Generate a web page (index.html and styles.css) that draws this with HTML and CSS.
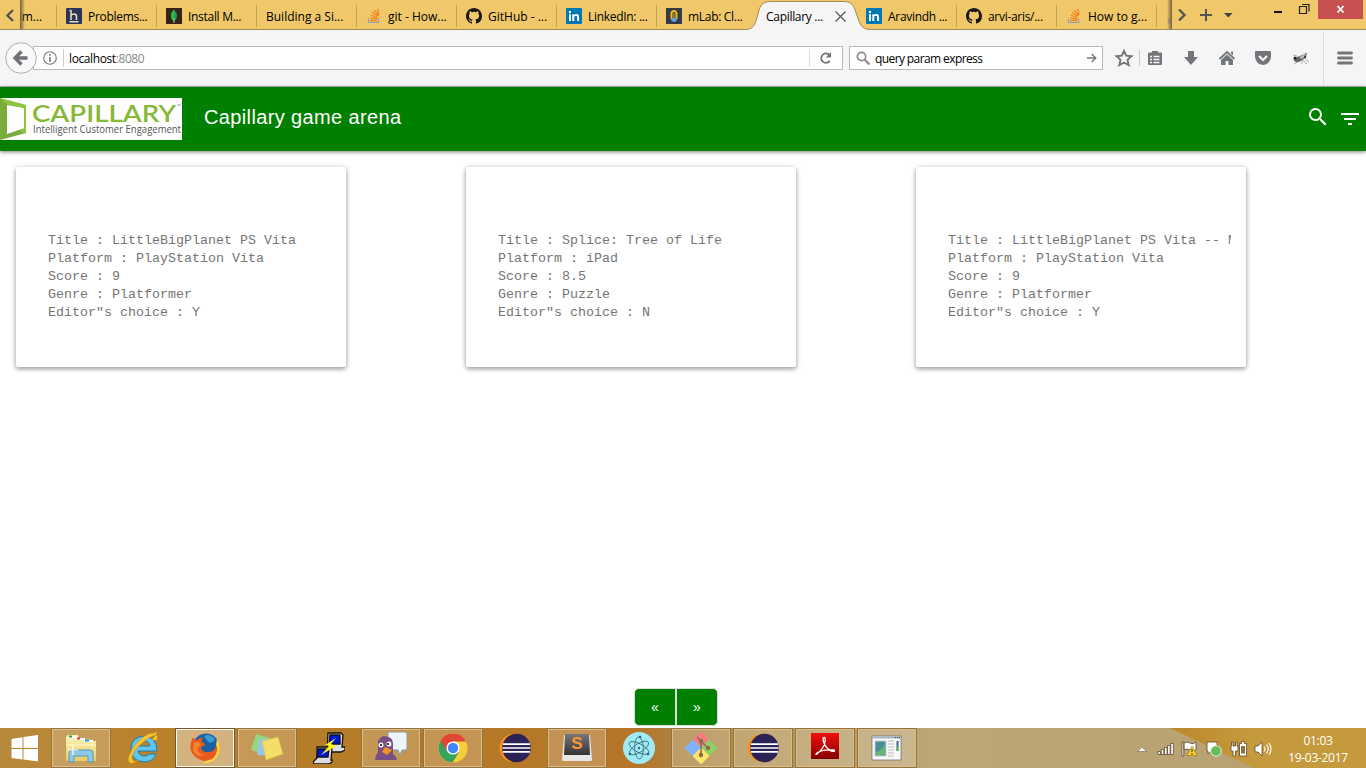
FILE: index.html
```html
<!DOCTYPE html>
<html lang="en">
<head>
<meta charset="utf-8">
<title>Capillary game arena</title>
<link rel="stylesheet" href="styles.css">
</head>
<body>
<svg class="defs" width="0" height="0">
  <defs>
    <symbol id="github" viewBox="0 0 16 16"><path fill="#191717" d="M8 0C3.58 0 0 3.58 0 8c0 3.54 2.29 6.53 5.47 7.59.4.07.55-.17.55-.38v-1.49c-2.22.49-2.69-.94-2.69-.94-.36-.92-.89-1.17-.89-1.17-.72-.5.06-.49.06-.49.8.06 1.22.82 1.22.82.72 1.21 1.87.87 2.33.66.07-.52.28-.87.5-1.07-1.77-.2-3.64-.89-3.64-3.95 0-.87.31-1.59.82-2.15-.08-.2-.36-1.02.08-2.12 0 0 .67-.21 2.2.82a7.6 7.6 0 0 1 4 0c1.53-1.04 2.2-.82 2.2-.82.44 1.1.16 1.92.08 2.12.51.56.82 1.27.82 2.15 0 3.07-1.87 3.75-3.65 3.95.29.25.54.73.54 1.48v2.2c0 .21.15.46.55.38A8 8 0 0 0 16 8c0-4.42-3.58-8-8-8z"/></symbol>
    <symbol id="linkedin" viewBox="0 0 16 16"><rect width="16" height="16" rx="1" fill="#0077b5"/><path fill="#fff" d="M3 6.2h2V13H3zM4 2.8a1.2 1.2 0 1 1 0 2.4 1.2 1.2 0 0 1 0-2.4zM6.3 6.2h2v.9c.4-.7 1.200-1.100 2.200-1.100 2 0 2.600 1.300 2.600 3.200V13h-2V9.600c0-.9-.1-1.900-1.300-1.900s-1.500.9-1.500 1.900V13h-2z"/></symbol>
    <symbol id="overflow" viewBox="0 0 16 16"><path d="M2.500 10.500v4h10v-4" fill="none" stroke="#8ba0bc" stroke-width="1.200"/><g stroke="#f5821f" stroke-width="1.300"><path d="M4 12.500h7M4.200 9.800l7 1.100M4.600 7l6.700 2.500M6 4.200l5.800 4.100M8.300 2.200l4.300 5.500M11.500.8l1.500 6"/></g></symbol>
    <symbol id="eclipse" viewBox="0 0 32 32"><circle cx="14.500" cy="16" r="14" fill="#f7941e"/><circle cx="17.500" cy="16" r="14.300" fill="#2c2255"/><path d="M4 12.200h27M3.500 16h28M4 19.800h27" stroke="#fff" stroke-width="1.700"/></symbol>
    <linearGradient id="folder" x2="0" y2="1"><stop stop-color="#fdf3b8"/><stop offset="1" stop-color="#e9cd68"/></linearGradient>
    <linearGradient id="adobe" x2="0" y2="1"><stop stop-color="#f01010"/><stop offset="1" stop-color="#850000"/></linearGradient>
    <linearGradient id="key" x2="0" y2="1"><stop stop-color="#777"/><stop offset="1" stop-color="#333"/></linearGradient>
  </defs>
</svg>

<div class="browser">
  <div class="tabstrip">
    <div class="scroll scroll-left"><svg width="20" height="30"><path d="M13 10l-5.500 5.500L13 21" fill="none" stroke="#555" stroke-width="2.400"/></svg></div>
    <div class="tabs">
      <div class="tab tab-first"><span>am...</span></div>
      <div class="tab"><svg class="fav" viewBox="0 0 16 16"><rect width="16" height="16" rx="1" fill="#2b3558"/><path d="M5 2v10M5 7.500q1-1.500 3-1.500 2.500 0 2.500 2.500V12M3.500 2.500H5M3.500 13.800h9" fill="none" stroke="#eee0bb" stroke-width="1.500"/></svg><span>Problems...</span></div>
      <div class="tab"><svg class="fav" viewBox="0 0 16 16"><rect width="16" height="16" fill="#36241b"/><path d="M8 1.500Q14 8 8 13.500Q2 8 8 1.500" fill="#13a550"/><path d="M8 1.500Q2 8 8 13.500" fill="#3fb64a"/><path d="M8 10v5" stroke="#9fbb93"/></svg><span>Install M...</span></div>
      <div class="tab"><span class="wide">Building a Si...</span></div>
      <div class="tab"><svg class="fav"><use href="#overflow"/></svg><span class="wide">git - How...</span></div>
      <div class="tab"><svg class="fav"><use href="#github"/></svg><span class="wide">GitHub - ...</span></div>
      <div class="tab"><svg class="fav"><use href="#linkedin"/></svg><span>LinkedIn: ...</span></div>
      <div class="tab no-sep"><svg class="fav" viewBox="0 0 16 16"><rect width="16" height="16" fill="#333c44"/><path d="M5.500 11V5.500a2.500 2.500 0 0 1 5 0V11" fill="none" stroke="#f5b716" stroke-width="2"/><path d="M8 5v7" stroke="#a6842b" stroke-width="1.500"/><path d="M5 10h6v2q-1 2-3 2t-3-2z" fill="#62a1d8"/></svg><span>mLab: Cl...</span></div>
      <div class="tab active no-sep"><svg class="tab-shape" width="126" height="30"><path d="M0 30V29.500C6 29.500 9 27 11 21L14 10C16 4 19 1.500 26 1.500H98C105 1.500 108 4 110 10L114 21C116 27 119 29.500 126 29.500V30z" fill="#f5f5f5"/><path d="M0 29.500C6 29.500 9 27 11 21L14 10C16 4 19 1.500 26 1.500H98C105 1.500 108 4 110 10L114 21C116 27 119 29.500 126 29.500" fill="none" stroke="#a08b54"/></svg><span>Capillary ...</span><svg class="tab-close" width="11" height="11"><path d="M.5.500l10 10M10.500.500l-10 10" stroke="#555" stroke-width="1.200"/></svg></div>
      <div class="tab"><svg class="fav"><use href="#linkedin"/></svg><span>Aravindh ...</span></div>
      <div class="tab"><svg class="fav"><use href="#github"/></svg><span>arvi-aris/...</span></div>
      <div class="tab"><svg class="fav"><use href="#overflow"/></svg><span class="wide">How to g...</span></div>
      <div class="tab"><svg class="fav"><use href="#overflow"/></svg></div>
    </div>
    <svg class="controls" width="194" height="30"><g fill="none" stroke="#555" stroke-width="2.400"><path d="M7 9.500l5.500 5.500L7 20.500"/><path d="M34 9v12M28 15h12" stroke-width="2"/></g><path d="M52 13h8.500l-4.200 4.500z" fill="#444"/><path d="M102 12h8" stroke="#111" stroke-width="2"/><path d="M127.500 6.500h7v7h-7zM130 4.500h7v7" fill="none" stroke="#222" stroke-width="1.200"/><rect x="146" width="45" height="19" fill="#c75050"/><path d="M165.500 6l6 6.500M171.500 6l-6 6.500" stroke="#fff" stroke-width="1.800"/></svg>
  </div>

  <div class="navbar">
    <svg class="back" width="32" height="32"><circle cx="16" cy="16" r="15.300" fill="#f9f9f9" stroke="#a6b0ba"/><path d="M22.500 16H11M16.500 9.500L10 16l6.500 6.500" fill="none" stroke="#6e7276" stroke-width="3.300"/></svg>
    <div class="urlbar">
      <svg class="info" width="14" height="14"><circle cx="7" cy="7" r="6.300" fill="none" stroke="#777" stroke-width="1.100"/><path d="M7 6v5M7 3v1.800" stroke="#777" stroke-width="1.600"/></svg>
      <span class="url">localhost<i>:8080</i></span>
      <div class="reload"><svg width="14" height="14"><path d="M10.800 9.800A4.700 4.700 0 1 1 10.800 4.500" fill="none" stroke="#777" stroke-width="1.800"/><path d="M12 1v5.500H6.800z" fill="#777"/></svg></div>
    </div>
    <div class="search">
      <svg width="15" height="15"><circle cx="5.500" cy="5.500" r="4.200" fill="none" stroke="#8c8c8c" stroke-width="1.700"/><path d="M8.500 8.500l5 5" stroke="#8c8c8c" stroke-width="2.300"/></svg>
      <span>query param express</span>
      <svg class="go" width="10" height="10"><path d="M0 5h8M4.700 1l4 4-4 4" fill="none" stroke="#777" stroke-width="1.500"/></svg>
    </div>
    <div class="tools">
      <svg width="26" height="34"><path d="M13 9.800l2.200 4.900 5.300.6-4 3.600 1.200 5.300-4.700-2.700-4.700 2.700 1.200-5.300-4-3.600 5.300-.6z" fill="none" stroke="#72767b" stroke-width="1.900"/></svg>
      <svg width="36" height="34"><path d="M2.500 9v16" stroke="#c8c8c8"/><path d="M12 11.500h3V10h6v1.500h3q1 0 1 1V23q0 1-1 1H12q-1 0-1-1V12.500q0-1 1-1z" fill="#72767b"/><path d="M13 15.500h2M16.500 15.500h6M13 18.500h2M16.500 18.500h6M13 21.500h2M16.500 21.500h6" stroke="#f5f5f5" stroke-width="1.500"/></svg>
      <svg width="36" height="34"><path d="M15 10h6v6h4l-7 8-7-8h4z" fill="#72767b"/></svg>
      <svg width="36" height="34"><path d="M10.500 18L18 11l7.500 7" fill="none" stroke="#72767b" stroke-width="1.800"/><path d="M18 13.500l6 5.500v5h-4.500v-4h-3v4H12v-5zM22 10.500h2v4l-2-2z" fill="#72767b"/></svg>
      <svg width="36" height="34"><path d="M11 10h14q1 0 1 1v5q-1 7-8 8-7-1-8-8v-5q0-1 1-1z" fill="#72767b"/><path d="M14 15l4 4 4-4" fill="none" stroke="#f5f5f5" stroke-width="2.200"/></svg>
      <svg width="40" height="34"><path d="M12 14l4 1m-4 4l5-1m-4 5l5-3m2 3l2-3m4 3l-4-4m6 2l-5-4" stroke="#999" stroke-width=".8"/><ellipse cx="18" cy="18" rx="5" ry="2.600" fill="#666" transform="rotate(-20 18 18)"/><path d="M18 16q3-4 8-4 1 3-5 6z" fill="#909090"/><path d="M20 14l4-1m-5 4l4-2" stroke="#eee"/><circle cx="14" cy="17" r="1.500" fill="#222"/><circle cx="24" cy="16" r="1.300" fill="#444"/></svg>
    </div>
    <div class="menu"><svg width="16" height="14"><path d="M1.500 2h13M1.500 7h13M1.500 12h13" stroke="#72767b" stroke-width="2.800" stroke-linecap="round"/></svg></div>
  </div>
</div>

<header class="header">
  <svg class="logo" width="182" height="42"><rect width="182" height="42" fill="#fff"/><path fill-rule="evenodd" d="M0 0l26 7v28L0 42zM7 7v29l18-6V10z" fill="#79ab3b"/><path d="M0 0l26 7.500V34l-5 1.500V32l3-1V10L7 6z" fill="#8cc63f"/><text x="32" y="24" textLength="144" lengthAdjust="spacingAndGlyphs" class="brand">CAPILLARY</text><text x="33" y="35" textLength="148" lengthAdjust="spacingAndGlyphs" class="tagline">Intelligent Customer Engagement</text><text x="177" y="10" class="tm">™</text></svg>
  <h1>Capillary game arena</h1>
  <svg class="find" width="24" height="24" viewBox="0 0 24 24"><path fill="#fff" d="M15.500 14h-.79l-.28-.27A6.470 6.470 0 0 0 16 9.500 6.500 6.500 0 1 0 9.500 16c1.610 0 3.090-.59 4.230-1.570l.27.28v.79l5 4.990L20.490 19l-4.990-5zm-6 0C7.010 14 5 11.990 5 9.500S7.010 5 9.500 5 14 7.010 14 9.500 11.990 14 9.500 14z"/></svg>
  <svg class="filter" width="24" height="24" viewBox="0 0 24 24"><path fill="#fff" d="M10 18h4v-2h-4v2zM3 6v2h18V6H3zm3 7h12v-2H6v2z"/></svg>
</header>

<main class="content">
  <div class="cards">
    <article class="card"><pre>Title : LittleBigPlanet PS Vita
Platform : PlayStation Vita
Score : 9
Genre : Platformer
Editor"s choice : Y</pre></article>
    <article class="card"><pre>Title : Splice: Tree of Life
Platform : iPad
Score : 8.5
Genre : Puzzle
Editor"s choice : N</pre></article>
    <article class="card"><pre>Title : LittleBigPlanet PS Vita -- M
Platform : PlayStation Vita
Score : 9
Genre : Platformer
Editor"s choice : Y</pre></article>
  </div>
  <nav class="pager"><a>«</a><a>»</a></nav>
</main>

<footer class="taskbar">
  <div class="start"><svg width="28" height="28"><path d="M.500 4L11.500 2.300V13H.500zM12.500 2.100L27 0v13H12.500zM.500 14h11v10.500L.500 23zM12.500 14H27v12.500l-14.500-2z" fill="#fff"/></svg></div>
  <div class="app open"><svg viewBox="0 0 32 32"><path d="M3 3h10l1 4h10l1 2h6v20H1V5z" fill="url(#folder)"/><path d="M4 5h8M10 7h10M19 9h9" stroke="#fff" stroke-width="2"/><path d="M4 4.500h3" stroke="#18a837" stroke-width="2"/><path d="M12 6.500h3" stroke="#d63b22" stroke-width="2"/><path d="M20 8.500h4" stroke="#2491d8" stroke-width="2"/><path d="M2 13h29" stroke="#fff6c6"/><path d="M4 30v-9q0-3 3-3h18q3 0 3 3v9h-5v-6H9v6z" fill="#8cc9e8" stroke="#5097ba"/><path d="M8 13v10M3 18h10" stroke="#fff" stroke-width="1.200"/></svg></div>
  <div class="app"><svg viewBox="0 0 32 32"><path fill-rule="evenodd" d="M30 19H11q1 5 6 5 4 0 5-2h7q-3 8-12 8Q4 29 4 17 4 5 17 4q13 1 13 15zM11 14h12q-1-5-6-5t-6 5z" fill="#5ec5ed" stroke="#197db3"/><path d="M25 8Q34-3 27 1 18 1 8 13-1 26 2 30q2 3 10-2-7 3-7-2 0-6 9-14 9-8 15-9 2 0 1 5" fill="#f8c52d" stroke="#c98b10" stroke-width=".5"/></svg></div>
  <div class="app open focus"><svg viewBox="0 0 32 32"><circle cx="17" cy="15" r="13.500" fill="#1d5f9f"/><path d="M15 4q6-3 11 3-2 5-7 3z" fill="#359bd1"/><path d="M28 6q6 11 0 19-5 7-14 6l12-9z" fill="#ffd33e"/><path d="M4 5q1 3 4 3 3-3 6-2-2 2-1 4l3 2q-1 3-4 3 0 5 6 5 7 1 10-7 1 10-5 14-8 4-15-1Q-3 19 4 5z" fill="#e65b1d"/><path d="M5 11q2-2 5-1l2 3-4 3q1 6 8 7-9 3-12-5z" fill="#f58325"/></svg></div>
  <div class="app open"><svg viewBox="0 0 32 32"><path d="M5 2l14 4-5 17-14-5z" fill="#96d681"/><path d="M8 7l15 1-2 16-15-1z" fill="#96c6ec"/><path d="M11 9l16-4 5 17-17 6z" fill="#f5dd69" stroke="#dfbd44" stroke-width=".6"/></svg></div>
  <div class="app"><svg viewBox="0 0 32 32"><g stroke="#111" stroke-width="1.300"><path d="M15 1h13l2 2-1 12h3v3l-4 2H16l-2-2z" fill="#ddd"/><path d="M17 3h10v9H16z" fill="#0018dc"/><path d="M4 15h13l2 2-1 11h1v2l-3 2H1l-1-2 4-4z" fill="#ddd"/><path d="M5 17h11l-1 8H4z" fill="#0018dc"/><path d="M23 6L12 13l4 1-8 9 15-9-5-2z" fill="#ffee20" stroke="none"/></g></svg></div>
  <div class="app open"><svg viewBox="0 0 32 32"><path d="M13 0h17q2 0 2 2v14q0 2-2 2h-3l-2 5-2-5H13z" fill="#ecf5fa" stroke="#769eb9"/><path d="M3 9q4-7 10-4 5 1 5 7v10q3 2 4 6H0q0-4 3-8z" fill="#785083"/><circle cx="6" cy="13" r="2.500" fill="#fff"/><circle cx="14" cy="12" r="2.500" fill="#fff"/><circle cx="6" cy="13" r="1"/><circle cx="13" cy="12" r="1"/><path d="M10 15l7 3-5 5-5-3z" fill="#f39122"/></svg></div>
  <div class="app open"><svg viewBox="0 0 32 32"><circle cx="16" cy="16" r="14.500" fill="#f8cc3a"/><path d="M16 16L3.500 8.800A14.500 14.500 0 0 0 15.500 30.500L22 20z" fill="#34a35b"/><path d="M3.500 8.800A14.500 14.500 0 0 1 29 9.500H16L10 19z" fill="#df4637"/><circle cx="16" cy="16" r="6.600" fill="#fff"/><circle cx="16" cy="16" r="5.200" fill="#4285f4"/></svg></div>
  <div class="app"><svg><use href="#eclipse"/></svg></div>
  <div class="app open"><svg viewBox="0 0 32 32"><path d="M3 3h26l2 25q0 1-2 1H3q-2 0-2-1z" fill="#e7e7e7"/><path d="M4 2h24l1 21H3z" fill="url(#key)"/><text x="16" y="17" text-anchor="middle" class="sublime">S</text></svg></div>
  <div class="app"><svg viewBox="0 0 32 32"><circle cx="16" cy="16" r="16" fill="#9feaf5"/><g fill="none" stroke="#376873" stroke-width=".8"><ellipse cx="16" cy="16" rx="11" ry="4.300" transform="rotate(28 16 16)"/><ellipse cx="16" cy="16" rx="11" ry="4.300" transform="rotate(88 16 16)"/><ellipse cx="16" cy="16" rx="11" ry="4.300" transform="rotate(148 16 16)"/></g><g fill="#376873"><circle cx="16" cy="16" r="1.200"/><circle cx="7" cy="22" r="1.300"/><circle cx="25" cy="22" r="1.300"/><circle cx="17" cy="5" r="1.300"/></g></svg></div>
  <div class="app open"><svg viewBox="0 0 32 32"><g stroke-linejoin="round" stroke-width="2"><path d="M16 1l7 7-7 7-7-7z" fill="#f77d7d" stroke="#f77d7d"/><path d="M8 9l7 7-7 7-7-7z" fill="#80b3ff" stroke="#80b3ff"/><path d="M24 9l7 7-7 7-7-7z" fill="#8fd064" stroke="#8fd064"/><path d="M16 17l7 7-7 7-7-7z" fill="#ffe56b" stroke="#ffe56b"/></g><path d="M12 5l4 4v14M16 9l7 7" stroke="#8a6a50" stroke-width="1.500" fill="none"/><g fill="#8a6a50"><circle cx="16" cy="9" r="2.200"/><circle cx="16" cy="23" r="2.200"/><circle cx="23" cy="16" r="2.200"/></g></svg></div>
  <div class="app open"><svg><use href="#eclipse"/></svg></div>
  <div class="app open"><svg viewBox="0 0 32 32"><rect x="2" y="1" width="28" height="26" fill="url(#adobe)"/><path d="M14 6q3-2 2 4-1 6-8 12-2 1 0-1 5-4 17-3 2 2-3 1-8-5-8-13z" fill="none" stroke="#fff" stroke-width="1.300"/></svg></div>
  <div class="app open"><svg viewBox="0 0 32 32"><rect x="1" y="4" width="29" height="24" fill="#f8f8f8" stroke="#666" stroke-width=".7"/><path d="M1 5.500h29" stroke="#a7b5c3" stroke-width="2"/><path d="M24 5.500h5" stroke="#345" stroke-dasharray="1 1"/><path d="M4 9h11v15H4z" fill="#478e98" stroke="#ccc"/><path d="M5 20q8-2 9-10v13H5z" fill="#69b575"/><path d="M17 9h6M17 12h6M17 15h6M17 18h6M17 21h6M17 24h6" stroke="#bbb"/><path d="M26.500 9v10" stroke="#37669a" stroke-width="2"/><path d="M26.500 14v5" stroke="#62b35b" stroke-width="2"/></svg></div>
  <svg class="tray" width="136" height="40"><path d="M1.500 23.500l4.500-4.500 4.500 4.500z" fill="#fff" stroke="#725f3d" stroke-width=".6"/><g fill="#fff" stroke="#5d4a29" stroke-width=".8"><path d="M22 23.500h2.600v3H22zM25.200 21.500h2.600v5h-2.600zM28.400 19.500H31v7h-2.600zM31.600 17.500h2.600v9h-2.600zM34.800 15.500h2.600v11h-2.600z"/><path d="M46 14h1.800v14H46zM48 15q3-2 6 0t6-1v8q-3 2-6 0t-6 0z"/><path d="M71 14h10v9h-6l-3 3v-3h-1z"/><path d="M95.500 14H97v4h2.500v-4h1.500v4h1v5h-2.500v5h-2.500v-5H95v-5h.5z"/><path d="M103.500 15.500h2v-2h3v2h2v12.500h-7z"/><path d="M119 18h3l4-4v14l-4-4h-3z"/></g><path d="M107 18v7.500" stroke="#87714f" stroke-width="4"/><path d="M56 18l5 9.500H51z" fill="#f8d232" stroke="#a27b0f" stroke-width=".7"/><path d="M56 21v3m0 1v1.500" stroke="#222"/><circle cx="80" cy="23" r="5.300" fill="#68bd59" stroke="#e6eed5"/><path d="M128 18.500q2 2.500 0 5M130.500 16.500q3.500 4.500 0 9M133 15q4 6 0 12" fill="none" stroke="#fff" stroke-width="1.100"/></svg>
  <div class="clock"><span>01:03</span><span>19-03-2017</span></div>
</footer>
</body>
</html>
```
FILE: styles.css
```css
* { box-sizing: border-box; }
body { margin: 0; width: 1366px; height: 768px; overflow: hidden; display: flex; flex-direction: column; background: #fff; font-family: "Liberation Sans", sans-serif; }
svg { flex: none; display: block; }
.defs { position: absolute; }

.browser { flex: none; height: 87px; background: #f5f5f5; border-bottom: 1px solid #b9b9b9; font: 12px "Open Sans", sans-serif; color: #000; }
.tabstrip { height: 30px; display: flex; background: linear-gradient(#f0c869 29px, #a08b54 29px); }
.scroll { width: 20px; }
.tabs { width: 1152px; display: flex; overflow: hidden; position: relative; }
.tabs::before, .tabs::after { content: ""; position: absolute; z-index: 3; top: 0; width: 5px; height: 29px; }
.tabs::before { left: 0; background: linear-gradient(90deg, #75613a, #75613a00); }
.tabs::after { right: 0; background: linear-gradient(270deg, #75613a, #75613a00); }
.tab { flex: none; width: 100px; height: 30px; display: flex; align-items: center; gap: 6px; padding: 2px 0 0 10px; position: relative; white-space: nowrap; letter-spacing: -0.3px; }
.tab::after { content: ""; position: absolute; right: -1px; top: 5px; width: 1px; height: 22px; background: #c4a45b; }
.tab.no-sep::after { display: none; }
.tab-first { width: 36px; padding-left: 0; }
.tab-first span { margin-left: -5px; letter-spacing: 0; }
.wide { letter-spacing: 0; }
.fav { width: 16px; height: 16px; }
.active { z-index: 2; }
.active span, .tab-close { position: relative; }
.tab-close { margin-left: 6px; }
.tab-shape { position: absolute; left: -11px; top: 0; }

.navbar { height: 56px; display: flex; align-items: center; padding-left: 5px; }
.back { position: relative; z-index: 1; }
.urlbar { flex: none; width: 810px; height: 24px; margin-left: -4px; margin-right: 6px; display: flex; align-items: center; background: #fff; border: 1px solid #b4bdc6; }
.info { margin-left: 9px; }
.url { margin-left: 6px; padding-left: 5px; line-height: 17px; padding-top: 1px; border-left: 1px solid #ccc; letter-spacing: -0.4px; }
.url i { font-style: normal; color: #888; }
.reload { margin-left: auto; width: 33px; height: 18px; border-left: 1px solid #ddd; display: flex; align-items: center; justify-content: center; }
.search { flex: none; width: 254px; height: 24px; display: flex; align-items: center; gap: 4px; padding: 0 5px 0 6px; background: #fff; border: 1px solid #b4bdc6; letter-spacing: -0.6px; }
.search span { padding-top: 1px; }
.go { margin-left: auto; }
.tools { display: flex; margin-left: 8px; }
.menu { width: 43px; height: 52px; margin-left: 2px; border-left: 1px solid #dcdcdc; display: flex; align-items: center; padding-left: 13px; }

.header { flex: none; height: 64px; background: #008000; display: flex; align-items: center; box-shadow: 0 1px 4px rgba(0,0,0,.5); color: #fff; position: relative; }
.header h1 { flex: 1; margin: -3px 0 0 22px; font-size: 20px; font-weight: 400; letter-spacing: .37px; }
.find { margin: -4px 8px 0 0; }
.filter { margin-right: 4px; }
.brand { font: 600 23px Lato, sans-serif; fill: #86b936; }
.tagline { font: 10px "Open Sans", sans-serif; fill: #555; }
.tm { font: 5px "Open Sans", sans-serif; fill: #777; }

.content { flex: 1; display: flex; flex-direction: column; justify-content: space-between; padding: 16px 16px 2px; }
.cards { display: flex; gap: 120px; }
.card { flex: none; width: 330px; height: 200px; padding: 65px 15px 0 32px; border-radius: 2px; background: #fff; box-shadow: 0 2px 4px rgba(0,0,0,.3), 0 1px 6px rgba(0,0,0,.18); }
.card pre { margin: 0; overflow: hidden; font: 13.33px/18px "Liberation Mono", monospace; color: #757575; }
.pager { display: flex; justify-content: center; height: 38px; margin-left: -14px; }
.pager a { width: 42px; border: 1px solid #ddd; background: #008000; color: #fff; font-size: 14px; display: flex; align-items: center; justify-content: center; }
.pager a:first-child { border-radius: 5px 0 0 5px; }
.pager a:last-child { border-radius: 0 5px 5px 0; }

.taskbar { flex: none; height: 40px; display: flex; gap: 2px; align-items: stretch; position: relative; z-index: 0; background: linear-gradient(90deg, #b88a3e 0, #b9822d 130px, #b47b27 400px, #b67529 640px, #ad8443 680px, #b49558 770px, #bda677 930px, #b79f70 1366px); }
.taskbar::before { content: ""; position: absolute; z-index: -1; right: 0; top: 0; width: 196px; height: 40px; background: linear-gradient(90deg, #bd872c, #c49a3c 80px); clip-path: polygon(0 0, 100% 0, 100% 100%, 84px 100%); }
.start { width: 49px; padding: 7px 0 0 11px; }
.app { width: 60px; display: flex; align-items: center; justify-content: center; }
.app svg { width: 32px; height: 32px; }
.open { border: 1px solid #94733d; box-shadow: inset 0 0 0 1px #d9be8c; background: #ffffff35; }
.focus { border-color: #765525; box-shadow: inset 0 0 0 1px #fff; background: #ffffff65; }
.tray { margin-left: 217px; }
.clock { width: 72px; margin-left: 8px; padding-top: 4px; display: flex; flex-direction: column; align-items: center; font: 12px/17px "Open Sans", sans-serif; letter-spacing: -0.3px; color: #fff; }
.sublime { font: 700 17px "Liberation Sans", sans-serif; fill: #ff9735; }
```
